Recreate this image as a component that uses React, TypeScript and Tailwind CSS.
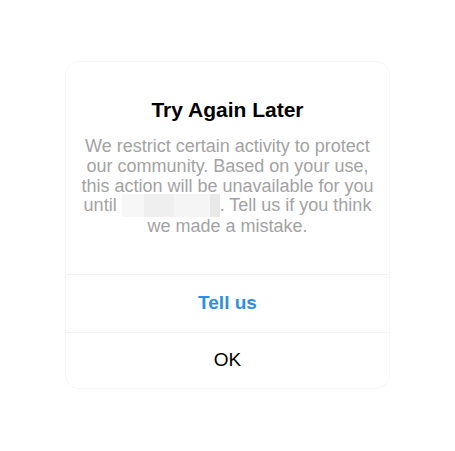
import React from 'react';

const font = { fontFamily: '"Liberation Sans", Arial, sans-serif' };

// Blurred placeholder where the date is hidden
const Redacted = () => (
  <span className="inline-block align-middle w-[98px] h-[23px] -mt-[3px] rounded-[2px] bg-[#f4f4f4]">
    <span className="flex h-full">
      <span className="w-[22px] bg-[#f7f7f7]" />
      <span className="w-[30px] bg-[#efefef]" />
      <span className="flex-1 bg-[#f5f5f5]" />
      <span className="w-[10px] bg-[#e8e8e8]" />
    </span>
  </span>
);

export default function App() {
  return (
    <div className="w-[455px] h-[451px] bg-white flex justify-center pt-[61px]" style={font}>
      <div className="w-[325px] h-[328px] rounded-[14px] border border-[#f6f6f6] bg-white flex flex-col">
        <div className="pt-[35px] px-[10px] text-center">
          <h2 className="text-[21px] leading-[26px] font-bold text-black">Try Again Later</h2>
          <p className="mt-[14px] text-[18px] leading-[19.8px] text-[#a3a3a3] whitespace-nowrap">
            We restrict certain activity to protect
            <br />
            our community. Based on your use,
            <br />
            this action will be unavailable for you
            <br />
            until <Redacted />. Tell us if you think
            <br />
            we made a mistake.
          </p>
        </div>
        <div className="mt-auto">
          <button className="w-full h-[58px] border-t border-[#f2f2f2] text-[19px] font-bold text-[#2f8fde]">
            Tell us
          </button>
          <button className="w-full h-[56px] border-t border-[#f2f2f2] text-[19px] text-black">OK</button>
        </div>
      </div>
    </div>
  );
}
